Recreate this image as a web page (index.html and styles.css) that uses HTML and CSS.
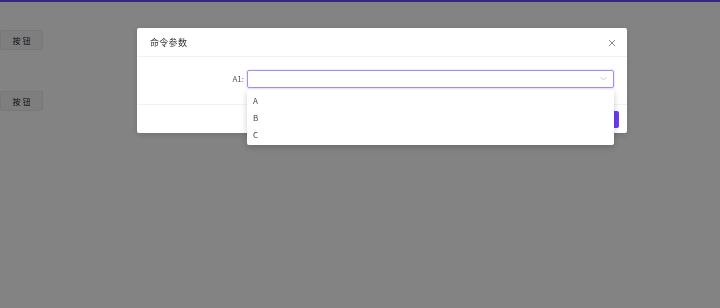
FILE: index.html
```html
<!DOCTYPE html>
<html lang="zh">
<head>
	<meta charset="UTF-8">
	<title>命令参数</title>
	<link rel="stylesheet" href="styles.css">
</head>
<body>
	<div class="topbar"></div>
	<div class="page">
		<button class="btn">按 钮</button>
		<button class="btn btn-second">按 钮</button>
	</div>

	<div class="mask"></div>
	<div class="modal">
		<div class="modal-header">
			<span class="modal-title">命令参数</span>
			<svg class="close" width="8" height="8" viewBox="0 0 8 8"><path d="M1 1L7 7M7 1L1 7" stroke="#8a8a8a" stroke-width="1"/></svg>
		</div>
		<div class="modal-body">
			<label class="label">A1:</label>
			<div class="select">
				<svg class="arrow" width="7" height="5" viewBox="0 0 7 5"><path d="M0.5 1L3.5 4L6.5 1" fill="none" stroke="#c4c4c4" stroke-width="0.9"/></svg>
			</div>
		</div>
		<div class="modal-footer">
			<button class="ok">确定</button>
		</div>
	</div>
	<ul class="dropdown">
		<li>A</li>
		<li>B</li>
		<li>C</li>
	</ul>
</body>
</html>
```
FILE: styles.css
```css
*{
    margin: 0;
    padding: 0;
    box-sizing: border-box;
}
body{
    width: 720px;
    height: 308px;
    background: #fff;
    font-family: "Noto Sans CJK SC", "Noto Sans", sans-serif;
    overflow: hidden;
}
.topbar{
    height: 2px;
    background: #6d4bff;
}
.page{
    display: flex;
    flex-direction: column;
    align-items: flex-start;
    padding-top: 28px;
}
.btn{
    width: 43px;
    height: 20px;
    background: #f6f6f6;
    border: 1px solid #eaeaea;
    border-radius: 2px;
    font-family: inherit;
    font-size: 8px;
    color: #222;
}
.btn-second{
    margin-top: 41px;
}
.mask{
    position: fixed;
    left: 0;
    top: 0;
    width: 100%;
    height: 100%;
    background: rgba(0, 0, 0, .485);
}
.modal{
    position: fixed;
    left: 137px;
    top: 28px;
    width: 490px;
    height: 105px;
    background: #fff;
    border-radius: 2px;
    box-shadow: 0 2px 6px rgba(0, 0, 0, .15);
}
.modal-header{
    height: 29px;
    display: flex;
    align-items: center;
    justify-content: space-between;
    padding: 1px 11px 0 13px;
    border-bottom: 1px solid #f2f2f2;
}
.modal-title{
    font-size: 9px;
    color: #333;
    letter-spacing: .3px;
}
.modal-body{
    height: 48px;
    display: flex;
    align-items: center;
    padding: 0 13px 4px 90px;
    border-bottom: 1px solid #f2f2f2;
}
.label{
    width: 17px;
    font-size: 8px;
    color: #555;
    text-align: right;
    margin-right: 3px;
}
.select{
    flex: 1;
    height: 18px;
    border: 1px solid #a98cf8;
    border-radius: 2px;
    box-shadow: 0 0 0 1px rgba(150, 120, 250, .15);
    display: flex;
    align-items: center;
    justify-content: flex-end;
    padding-right: 6px;
}
.modal-footer{
    height: 28px;
    display: flex;
    align-items: center;
    justify-content: flex-end;
    padding-right: 8px;
}
.ok{
    width: 36px;
    height: 17px;
    background: #6a3cf5;
    border: none;
    border-radius: 2px;
    color: #fff;
    font-size: 8px;
}
.dropdown{
    position: fixed;
    left: 247px;
    top: 90px;
    width: 367px;
    height: 55px;
    background: #fff;
    list-style: none;
    padding-top: 2px;
    border-radius: 2px;
    box-shadow: 0 2px 6px rgba(0, 0, 0, .2);
}
.dropdown li{
    height: 17px;
    line-height: 17px;
    padding-left: 6px;
    font-size: 8px;
    color: #444;
}
```
